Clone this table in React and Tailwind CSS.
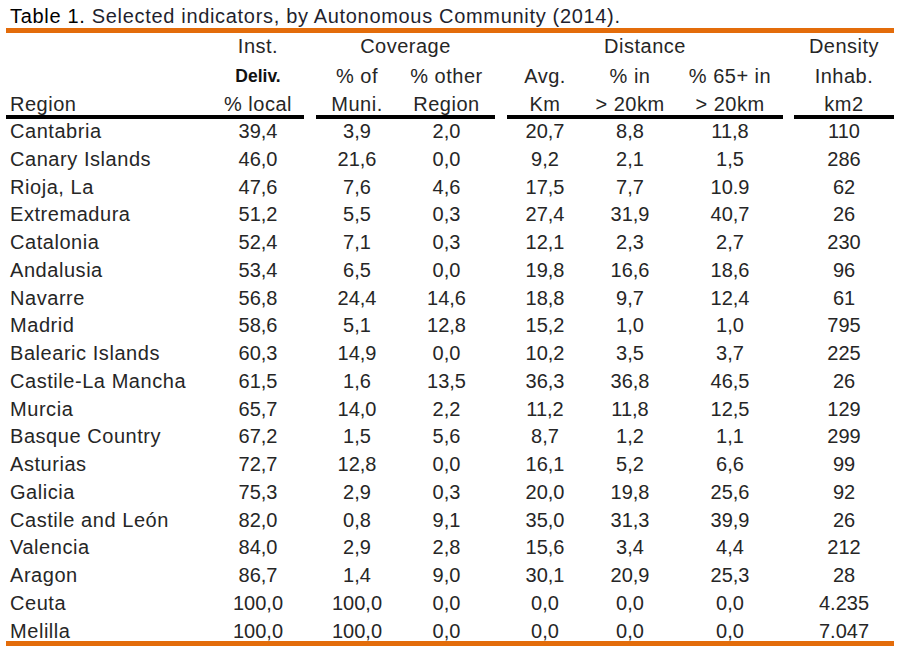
import React from 'react';

const GRID =
  'grid grid-cols-[206px_92px_12px_82px_97px_12px_76px_94px_106px_11px_100px]';

const rows = [
  ['Cantabria', '39,4', '3,9', '2,0', '20,7', '8,8', '11,8', '110'],
  ['Canary Islands', '46,0', '21,6', '0,0', '9,2', '2,1', '1,5', '286'],
  ['Rioja, La', '47,6', '7,6', '4,6', '17,5', '7,7', '10.9', '62'],
  ['Extremadura', '51,2', '5,5', '0,3', '27,4', '31,9', '40,7', '26'],
  ['Catalonia', '52,4', '7,1', '0,3', '12,1', '2,3', '2,7', '230'],
  ['Andalusia', '53,4', '6,5', '0,0', '19,8', '16,6', '18,6', '96'],
  ['Navarre', '56,8', '24,4', '14,6', '18,8', '9,7', '12,4', '61'],
  ['Madrid', '58,6', '5,1', '12,8', '15,2', '1,0', '1,0', '795'],
  ['Balearic Islands', '60,3', '14,9', '0,0', '10,2', '3,5', '3,7', '225'],
  ['Castile-La Mancha', '61,5', '1,6', '13,5', '36,3', '36,8', '46,5', '26'],
  ['Murcia', '65,7', '14,0', '2,2', '11,2', '11,8', '12,5', '129'],
  ['Basque Country', '67,2', '1,5', '5,6', '8,7', '1,2', '1,1', '299'],
  ['Asturias', '72,7', '12,8', '0,0', '16,1', '5,2', '6,6', '99'],
  ['Galicia', '75,3', '2,9', '0,3', '20,0', '19,8', '25,6', '92'],
  ['Castile and León', '82,0', '0,8', '9,1', '35,0', '31,3', '39,9', '26'],
  ['Valencia', '84,0', '2,9', '2,8', '15,6', '3,4', '4,4', '212'],
  ['Aragon', '86,7', '1,4', '9,0', '30,1', '20,9', '25,3', '28'],
  ['Ceuta', '100,0', '100,0', '0,0', '0,0', '0,0', '0,0', '4.235'],
  ['Melilla', '100,0', '100,0', '0,0', '0,0', '0,0', '0,0', '7.047'],
];

function DataRow({ cells, last }) {
  const [region, inst, muni, other, avg, pin, p65, dens] = cells;
  const h = last ? 'h-[22.5px]' : 'h-[27.75px]';
  return (
    <div className={`${GRID} ${h} leading-[24px]`}>
      <div className="pl-[4px] tracking-[0.55px]">{region}</div>
      <div className="text-center">{inst}</div>
      <div />
      <div className="text-center">{muni}</div>
      <div className="text-center">{other}</div>
      <div />
      <div className="text-center">{avg}</div>
      <div className="text-center">{pin}</div>
      <div className="text-center">{p65}</div>
      <div />
      <div className="text-center">{dens}</div>
    </div>
  );
}

export default function App() {
  return (
    <div
      className="w-[904px] h-[652px] bg-white text-[#262626] overflow-hidden"
      style={{ fontFamily: '"Liberation Sans", Arial, sans-serif' }}
    >
      <div className="ml-[6px] w-[888px]">
        {/* Title */}
        <div className="h-[28px] pt-[4px] pl-[4px] leading-[24px] text-[20px] tracking-[0.68px] whitespace-nowrap">
          <span className="text-black">Table 1.</span>{' '}
          <span className="text-[#1f1f2e]">Selected indicators, by Autonomous Community (2014).</span>
        </div>
        <div className="h-[5px] bg-[#e36c0a]" />

        {/* Header */}
        <div className="text-[20px] tracking-[0.5px]">
          <div className={`${GRID} h-[28.5px] leading-[27.5px]`}>
            <div />
            <div className="text-center">Inst.</div>
            <div />
            <div className="col-span-2 text-center">Coverage</div>
            <div />
            <div className="col-span-3 text-center">Distance</div>
            <div />
            <div className="text-center">Density</div>
          </div>
          <div className={`${GRID} h-[28.5px] leading-[28.5px]`}>
            <div />
            <div className="text-center font-bold text-[17.5px] text-[#111] tracking-normal">Deliv.</div>
            <div />
            <div className="text-center">% of</div>
            <div className="text-center">% other</div>
            <div />
            <div className="text-center">Avg.</div>
            <div className="text-center">% in</div>
            <div className="text-center">% 65+ in</div>
            <div />
            <div className="text-center">Inhab.</div>
          </div>
          <div className={`${GRID} h-[25px] leading-[28.5px]`}>
            <div className="pl-[4px]">Region</div>
            <div className="text-center">% local</div>
            <div />
            <div className="text-center">Muni.</div>
            <div className="text-center">Region</div>
            <div />
            <div className="text-center">Km</div>
            <div className="text-center">&gt; 20km</div>
            <div className="text-center">&gt; 20km</div>
            <div />
            <div className="text-center">km2</div>
          </div>
          <div className={`${GRID} h-[4px]`}>
            <div className="col-span-2 bg-black" />
            <div />
            <div className="col-span-2 bg-black" />
            <div />
            <div className="col-span-3 bg-black" />
            <div />
            <div className="bg-black" />
          </div>
        </div>

        {/* Body */}
        <div className="text-[20px]">
          {rows.map((r, i) => (
            <DataRow key={r[0]} cells={r} last={i === rows.length - 1} />
          ))}
        </div>
        <div className="h-[5px] bg-[#e36c0a]" />
      </div>
    </div>
  );
}
